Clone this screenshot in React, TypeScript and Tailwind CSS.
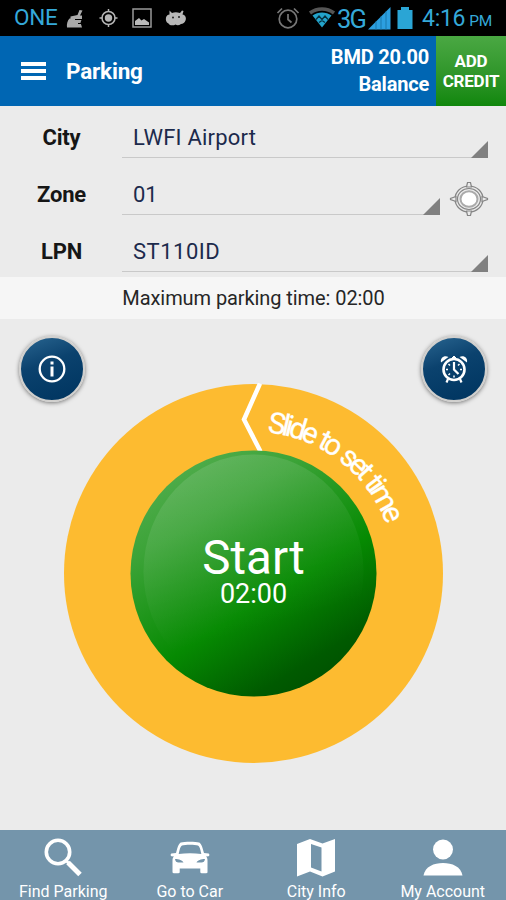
import type { ReactNode } from 'react';
import { clsx } from 'clsx';

const fields = [
  { label: 'City', value: 'LWFI Airport', valueClass: 'tracking-[0.2px]' },
  { label: 'Zone', value: '01', valueClass: '', locate: true },
  { label: 'LPN', value: 'ST110ID', valueClass: 'tracking-[0.5px]' },
];

const tabs = [
  { title: 'Find Parking', icon: SearchIcon },
  { title: 'Go to Car', icon: CarIcon },
  { title: 'City Info', icon: MapIcon },
  { title: 'My Account', icon: PersonIcon },
];

function SearchIcon() {
  return (
    <svg width="40" height="40" viewBox="0 0 40 40" fill="none" stroke="#fff">
      <circle cx="15" cy="14" r="11.7" strokeWidth="3.6" />
      <path d="M23 22.5l2.500 2.500" strokeWidth="3" />
      <path d="M25 24.500l12 12" strokeWidth="5" />
    </svg>
  );
}

function CarIcon() {
  return (
    <svg width="40" height="40" viewBox="0 0 40 40" fill="#fff">
      <path
        fillRule="evenodd"
        d="M11 4.500C14 3.400 26 3.400 29 4.500c2 .8 3 3 5 10.500l4.600.4c1 .2 1 2.600 0 2.800l-2.600.4c1.200 1 1.500 2.500 1.500 4V34c0 .8-.5 1.200-1.200 1.200h-4.800c-.8 0-1.200-.5-1.200-1.200v-3.500H9.700V34c0 .8-.5 1.200-1.200 1.200H3.700c-.8 0-1.200-.5-1.200-1.200V22.600c0-1.500.3-3 1.500-4l-2.600-.4c-1-.2-1-2.600 0-2.800L6 15c2-7.500 3-9.700 5-10.500zM12 7.500c-1.500.8-2.500 4-3.300 8.500 7-1 15.600-1 22.600 0-.8-4.500-1.800-7.700-3.300-8.500-3-1-13-1-16 0zM5 21c.3 2.500 1.500 3.500 3.500 3.600h5c-1-2.200-4.500-3.600-8.500-3.600zM35 21c-4 0-7.500 1.400-8.500 3.600h5c2-.1 3.200-1.100 3.500-3.600z"
      />
    </svg>
  );
}

function MapIcon() {
  return (
    <svg width="40" height="40" viewBox="0 0 40 40" fill="#fff">
      <path
        fillRule="evenodd"
        d="M1 6L14 1l12.500 4.500L39 1v32.500L26.500 38.500 14 33.500 1 38.500zM15 6v23.500l10.500 4V9.500z"
      />
    </svg>
  );
}

function PersonIcon() {
  return (
    <svg width="40" height="40" viewBox="0 0 40 40" fill="#fff">
      <circle cx="20" cy="11.500" r="10" />
      <path d="M.5 37.500C2 28.500 11 25 20 25s18 3.500 19.500 12.500z" />
    </svg>
  );
}

function StatusBar() {
  return (
    <div className="flex h-9 items-center bg-black pl-[14px] text-[#35a9d9]">
      <span className="w-[46px] pb-[2px] text-[22.500px] leading-8 tracking-[-0.3px]">ONE</span>
      {/* cleaner notification */}
      <svg className="ml-[6px] mt-px" width="19" height="20" viewBox="0 0 19 20" fill="#aaa">
        <path d="M13.500 1l3 .5-2.500 5h2v3.500H4.500V7.500l7-1.500z" />
        <path d="M3.500 9.500h12.500l-1.500 4 1.500 5H1c-.5-3.500.5-7 2.500-9z" />
        <path d="M9 10.500h8M12 14.500h5" stroke="#000" strokeWidth="1" />
      </svg>
      <svg className="ml-[14px]" width="19" height="20" viewBox="0 0 19 20" fill="none" stroke="#b5b5b5">
        <circle cx="9.500" cy="10" r="6.500" strokeWidth="1.500" />
        <circle cx="9.500" cy="10" r="3.700" fill="#b5b5b5" stroke="none" />
        <path d="M9.500 1v3M9.500 16v3M.5 10h3M15.500 10h3" strokeWidth="1.500" />
      </svg>
      <svg className="ml-[14px]" width="20" height="20" viewBox="0 0 20 20">
        <rect x="1" y="1" width="18" height="18" fill="none" stroke="#999" strokeWidth="1.500" />
        <path d="M3 17v-4l4-3 2.500 2.500L12 11l5 3.500V17z" fill="#bbb" />
      </svg>
      <svg className="ml-[13px]" width="22" height="18" viewBox="0 0 22 18" fill="#b8b8b8">
        <path d="M4.500 1.500L7 4c2.500-1 5-1 8 0l2-2.500 1.500.5-1 3.500c3 .5 4 3.500 3 6-.8 2-2.500 3.500-4.500 3.500-2 1.500-4 1.500-5.500.5C8 17 4.500 16.500 3.500 14.500 1 13.500.5 10.500 1 8.500 1.500 6.500 3 5.500 4.500 5.500z" />
        <circle cx="8" cy="8.500" r="1" fill="#222" />
        <circle cx="14" cy="8" r="1" fill="#222" />
      </svg>
      <svg className="ml-[89px]" width="24" height="24" viewBox="0 0 24 24" fill="none" stroke="#777" strokeWidth="1.700">
        <circle cx="12" cy="13" r="8.800" />
        <path d="M12 8v5.500l3.500 3M1.500 7L6 2.500M18 2.500L22.500 7" />
      </svg>
      <svg className="ml-[8px]" width="28" height="22" viewBox="0 0 28 22">
        <path d="M2 6C9 .5 19 .5 26 6" fill="none" stroke="#555" strokeWidth="3.500" />
        <path d="M4.500 8.500C10 4.500 18 4.500 23.500 8.500L14 20.500z" fill="#23a3ca" />
        <path d="M8 12.500L11 9l3 3.500L17 9l3 3.500M11 15.500l3-2 3 2" fill="none" stroke="#06303f" strokeWidth="1.300" />
      </svg>
      <span className="ml-px w-[27px] pt-px text-[25.500px] leading-8 tracking-[-1.800px]">3G</span>
      <svg className="ml-[3px]" width="24" height="24" viewBox="0 0 24 24">
        <path d="M1 23.500L23.500 1v22.500z" fill="#2c9fe0" />
        <path d="M9 15.500v8M14 10.500v13M19 5.500v18" stroke="#1878ad" strokeWidth="1" />
      </svg>
      <svg className="ml-[6px]" width="16" height="22" viewBox="0 0 16 22" fill="#2aa5d5">
        <path d="M4 0h8v3h3.500v19H.5V3H4z" />
      </svg>
      <span className="ml-[9px] pt-px text-[23px] leading-8 tracking-[-0.300px]">4:16</span>
      <span className="ml-[4px] pt-[6px] text-[15.500px] leading-[20px] tracking-[-0.200px]">PM</span>
    </div>
  );
}

function Header() {
  return (
    <header className="flex h-[70px] bg-[#0066b3] text-white">
      <button className="ml-[21px] flex w-[26px] flex-col justify-center gap-[3px]">
        <span className="h-[4px] w-[25px] bg-white" />
        <span className="h-[4px] w-[25px] bg-white" />
        <span className="h-[4px] w-[25px] bg-white" />
      </button>
      <h1 className="ml-[19px] self-center pt-px text-[22.500px] font-bold tracking-[-0.200px]">Parking</h1>
      <div className="ml-auto pt-[8px] pr-[7px] text-right text-[20px] leading-[27px] font-bold tracking-[-0.200px]">
        <p>BMD 20.00</p>
        <p>Balance</p>
      </div>
      <button className="flex w-[70px] flex-col items-center justify-center bg-linear-to-b from-[#4aa843] to-[#0f870b] pt-px text-[17px] leading-[19.500px] font-bold tracking-[-0.200px]">
        <span>ADD</span>
        <span>CREDIT</span>
      </button>
    </header>
  );
}

function LocateIcon() {
  return (
    <svg className="ml-[9px]" width="40" height="36" viewBox="0 0 40 36" fill="none" stroke="#858585" strokeWidth="1.200">
      <ellipse cx="20" cy="18" rx="14" ry="13" />
      <ellipse cx="20" cy="18" rx="11.500" ry="10.500" />
      <ellipse cx="20" cy="18" rx="8.500" ry="7.800" strokeWidth="2" stroke="#aaa" fill="#fff" />
      <path
        d="M17.500 6L18.500 1.500h3L22.500 6zM17.500 30l1 4.500h3l1-4.500zM7 15.500L1.500 17.500v1l5.500 2zM33 15.500l5.500 2v1l-5.500 2z"
        fill="#ebebeb"
      />
    </svg>
  );
}

function Field({ label, value, valueClass, locate }: { label: string; value: string; valueClass: string; locate?: boolean }) {
  return (
    <div className="flex h-[57px] pl-[2px]">
      <label className="w-[120px] pt-[19px] pr-px text-center text-[22px] leading-[26px] font-bold tracking-[-0.200px] text-[#161616]">
        {label}
      </label>
      <div
        className={clsx(
          'flex h-[52px] items-end justify-between border-b-[1.500px] border-[#c9c9c9] pl-[11px]',
          locate ? 'w-[318px]' : 'w-[366px]',
        )}
      >
        <span className={clsx('pb-[6px] text-[22px] leading-[26px] text-[#1c2a4c]', valueClass)}>{value}</span>
        <svg className="-mb-px" width="17" height="17" viewBox="0 0 17 17">
          <path d="M17 0v17H0z" fill="#808080" />
        </svg>
      </div>
      {locate && (
        <button className="flex items-end pb-[3px]">
          <LocateIcon />
        </button>
      )}
    </div>
  );
}

function RoundButton({ children }: { children: ReactNode }) {
  return (
    <button className="flex size-[66px] items-center justify-center rounded-full border-2 border-[#d0cfcd] bg-linear-160 from-[#286590] via-[#0b426e] via-40% to-[#00345f] shadow-[0_1px_4px_rgba(0,0,0,0.5)]">
      {children}
    </button>
  );
}

function InfoIcon() {
  return (
    <svg className="mr-px" width="30" height="30" viewBox="0 0 30 30" fill="none" stroke="#fff">
      <circle cx="15" cy="15" r="12.300" strokeWidth="2.300" />
      <path d="M15 12.500v10M15 7.500v3" strokeWidth="3" />
    </svg>
  );
}

function AlarmIcon() {
  return (
    <svg width="30" height="30" viewBox="0 0 30 30" fill="none" stroke="#fff">
      <circle cx="15" cy="15.500" r="10.500" strokeWidth="2.600" />
      <path d="M15 8v7.500l4.500 4.500" strokeWidth="2.200" />
      <path d="M7 15.500h2M21 15.500h2M15 21.500v2M9.500 10l1.500 1.500M20.500 10L19 11.500M9.500 21l1.500-1.500" strokeWidth="1.500" />
      <path d="M9 25l-1.500 3.500M21 25l1.500 3.500" strokeWidth="2.200" />
      <path d="M2 8.500C1 4 5 1 9.500 3zM28 8.500C29 4 25 1 20.500 3z" fill="#fff" stroke="none" />
      <path d="M15 2v4M13 4h4" strokeWidth="2" />
    </svg>
  );
}

function Dial() {
  return (
    <div className="relative mx-auto -mt-[19px] size-[380px]">
      <svg width="380" height="380" viewBox="-0.5 -0.5 380 380">
        <defs>
          <linearGradient id="ball" x1="0.22" y1="0.08" x2="0.76" y2="0.96">
            <stop offset="0" stopColor="#4dab49" />
            <stop offset="0.2" stopColor="#3ba337" />
            <stop offset="0.6" stopColor="#068a02" />
            <stop offset="0.9" stopColor="#005a00" />
            <stop offset="1" stopColor="#005200" />
          </linearGradient>
          <linearGradient id="gloss" x1="0.3" y1="0" x2="0.5" y2="0.75">
            <stop offset="0" stopColor="#fff" stopOpacity="0.12" />
            <stop offset="1" stopColor="#fff" stopOpacity="0" />
          </linearGradient>
          <path id="arc" d="M203.500 49A141.500 141.500 0 0 1 331.500 190" />
        </defs>
        <circle cx="190" cy="190" r="189.500" fill="#fdbb30" />
        <path d="M196.500 0L180.500 36L197 68" fill="none" stroke="#fff" strokeWidth="4.500" />
        <circle cx="190" cy="190" r="123" fill="url(#ball)" />
        <ellipse cx="190" cy="188" rx="110" ry="117" fill="url(#gloss)" />
        <text fill="#fff" fontSize="29.500" wordSpacing="3" stroke="#fff" strokeWidth="0.300">
          <textPath href="#arc" textLength="159" lengthAdjust="spacing">
            Slide to set time
          </textPath>
        </text>
      </svg>
      <button className="absolute inset-[67px] flex flex-col items-center pt-[86px] pl-px text-white">
        <span className="text-[47.500px] leading-[44px]">Start</span>
        <span className="text-[27px] leading-[28px]">02:00</span>
      </button>
    </div>
  );
}

export default function App() {
  return (
    <div className="flex h-[900px] w-[506px] flex-col overflow-hidden bg-[#ebebeb] font-['Roboto',sans-serif]">
      <StatusBar />
      <Header />
      <section className="h-[171px]">
        {fields.map((field) => (
          <Field key={field.label} {...field} />
        ))}
      </section>
      <p className="h-[42px] bg-[#f6f6f6] pl-px text-center text-[20px] leading-[42px] tracking-[-0.080px] text-[#262626]">
        Maximum parking time: 02:00
      </p>
      <main className="flex-1">
        <div className="flex justify-between pt-[17px] pr-[19px] pl-[19px]">
          <RoundButton>
            <InfoIcon />
          </RoundButton>
          <RoundButton>
            <AlarmIcon />
          </RoundButton>
        </div>
        <Dial />
      </main>
      <nav className="grid h-[70px] grid-cols-4 bg-[#7495ab] text-white">
        {tabs.map((tab) => (
          <button key={tab.title} className="flex flex-col items-center pt-[8px]">
            <tab.icon />
            <span className="mt-[4px] text-[16px] leading-[19px] whitespace-nowrap">{tab.title}</span>
          </button>
        ))}
      </nav>
    </div>
  );
}
